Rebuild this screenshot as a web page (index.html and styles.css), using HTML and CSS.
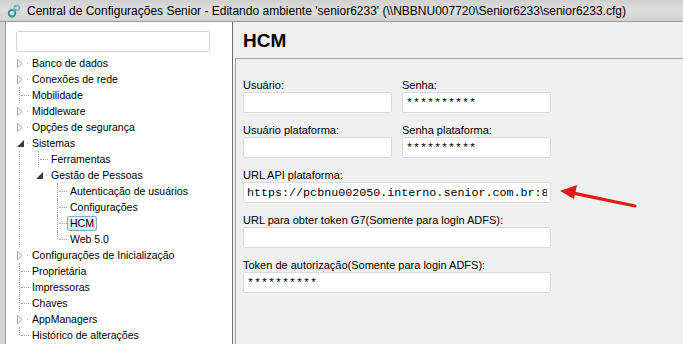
FILE: index.html
```html
<!DOCTYPE html>
<html lang="pt-BR">
<head>
    <meta charset="UTF-8">
    <meta name="viewport" content="width=device-width, initial-scale=1.0">
    <title>Central de Configurações Senior</title>
    <link rel="stylesheet" href="styles.css">
</head>
<body>

    <!-- Barra de título -->
    <div class="titlebar">
        <svg class="app-icon" viewBox="0 0 14 14">
            <circle cx="5" cy="9.2" r="3.3" fill="none" stroke="#2a8f95" stroke-width="1.8"/>
            <circle cx="10" cy="4" r="2.5" fill="none" stroke="#5fb7b9" stroke-width="1.6"/>
        </svg>
        <span class="title-text">Central de Configurações Senior - Editando ambiente 'senior6233' (\\NBBNU007720\Senior6233\senior6233.cfg)</span>
    </div>

    <div class="window-body">
        <div class="frame-left"></div>

        <!-- Árvore de configurações -->
        <div class="tree-panel">
            <input class="tree-search" type="text">
            <ul class="tree">
                <li><div class="row"><span class="exp closed"><svg viewBox="0 0 6 9"><path d="M0.5 0.5 L5.2 4.5 L0.5 8.5 Z" fill="none" stroke="#a6a6a6"/></svg></span>Banco de dados</div></li>
                <li><div class="row"><span class="exp closed"><svg viewBox="0 0 6 9"><path d="M0.5 0.5 L5.2 4.5 L0.5 8.5 Z" fill="none" stroke="#a6a6a6"/></svg></span>Conexões de rede</div></li>
                <li><div class="row"><span class="exp leaf"></span>Mobilidade</div></li>
                <li><div class="row"><span class="exp closed"><svg viewBox="0 0 6 9"><path d="M0.5 0.5 L5.2 4.5 L0.5 8.5 Z" fill="none" stroke="#a6a6a6"/></svg></span>Middleware</div></li>
                <li><div class="row"><span class="exp closed"><svg viewBox="0 0 6 9"><path d="M0.5 0.5 L5.2 4.5 L0.5 8.5 Z" fill="none" stroke="#a6a6a6"/></svg></span>Opções de segurança</div></li>
                <li>
                    <div class="row"><span class="exp open"><svg viewBox="0 0 7 7"><path d="M7 0 L7 7 L0 7 Z" fill="#3a3a3a"/></svg></span>Sistemas</div>
                    <ul>
                        <li><div class="row"><span class="exp leaf"></span>Ferramentas</div></li>
                        <li>
                            <div class="row"><span class="exp open"><svg viewBox="0 0 7 7"><path d="M7 0 L7 7 L0 7 Z" fill="#3a3a3a"/></svg></span>Gestão de Pessoas</div>
                            <ul class="no-line">
                                <li><div class="row"><span class="exp leaf"></span>Autenticação de usuários</div></li>
                                <li><div class="row"><span class="exp leaf"></span>Configurações</div></li>
                                <li><div class="row"><span class="exp leaf"></span><span class="sel">HCM</span></div></li>
                                <li><div class="row"><span class="exp leaf end"></span>Web 5.0</div></li>
                            </ul>
                        </li>
                    </ul>
                </li>
                <li><div class="row"><span class="exp closed"><svg viewBox="0 0 6 9"><path d="M0.5 0.5 L5.2 4.5 L0.5 8.5 Z" fill="none" stroke="#a6a6a6"/></svg></span>Configurações de Inicialização</div></li>
                <li><div class="row"><span class="exp leaf"></span>Proprietária</div></li>
                <li><div class="row"><span class="exp leaf"></span>Impressoras</div></li>
                <li><div class="row"><span class="exp leaf"></span>Chaves</div></li>
                <li><div class="row"><span class="exp closed"><svg viewBox="0 0 6 9"><path d="M0.5 0.5 L5.2 4.5 L0.5 8.5 Z" fill="none" stroke="#a6a6a6"/></svg></span>AppManagers</div></li>
                <li><div class="row"><span class="exp leaf end"></span>Histórico de alterações</div></li>
            </ul>
        </div>

        <div class="splitter"></div>

        <!-- Painel HCM -->
        <div class="config-panel">
            <div class="panel-header">
                <h1 class="panel-title">HCM</h1>
            </div>
            <div class="panel-body">
                <div class="form-grid">
                    <div class="field">
                        <label>Usuário:</label>
                        <input class="text-input" type="text" value="">
                    </div>
                    <div class="field">
                        <label>Senha:</label>
                        <input class="text-input" type="text" value="**********">
                    </div>
                    <div class="field">
                        <label>Usuário plataforma:</label>
                        <input class="text-input" type="text" value="">
                    </div>
                    <div class="field">
                        <label>Senha plataforma:</label>
                        <input class="text-input" type="text" value="**********">
                    </div>
                    <div class="field wide">
                        <label>URL API plataforma:</label>
                        <input class="text-input" type="text" value="https://pcbnu002050.interno.senior.com.br:8">
                    </div>
                    <div class="field wide">
                        <label>URL para obter token G7(Somente para login ADFS):</label>
                        <input class="text-input" type="text" value="">
                    </div>
                    <div class="field wide">
                        <label>Token de autorização(Somente para login ADFS):</label>
                        <input class="text-input" type="text" value="**********">
                    </div>
                </div>
            </div>
        </div>
    </div>

    <!-- Seta de destaque -->
    <svg class="red-arrow" viewBox="0 0 85 32">
        <path d="M16 12.6 L80 26" stroke="#e01b17" stroke-width="3.2" stroke-linecap="round"/>
        <path d="M5 11 L22 5 L19 19 Z" fill="#e01b17"/>
    </svg>

</body>
</html>
```

FILE: styles.css
```css
/* Geral */
* {
    box-sizing: border-box;
}

body {
    margin: 0;
    width: 683px;
    height: 344px;
    overflow: hidden;
    position: relative;
    font-family: "Liberation Sans", Arial, sans-serif;
    background-color: #d6d6d6;
}

/* Barra de título */
.titlebar {
    height: 21px;
    display: flex;
    align-items: center;
    padding-left: 7px;
    background: linear-gradient(#d0d0d0, #dddddd 45%, #d2d2d2);
}

.app-icon {
    width: 14px;
    height: 14px;
    margin-right: 6px;
}

.title-text {
    font-size: 12px;
    color: #000;
    white-space: nowrap;
}

.window-body {
    display: flex;
    height: 323px;
    border-top: 1px solid #9a9a9a;
}

.frame-left {
    width: 6px;
    background-color: #d3d3d3;
    border-right: 1px solid #9c9c9c;
}

/* Árvore */
.tree-panel {
    width: 226px;
    background-color: #fff;
}

.tree-search {
    display: block;
    width: 194px;
    height: 21px;
    margin: 9px 0 3px 10px;
    border: 1px solid #d5d5d5;
    border-radius: 2px;
    outline: none;
}

.tree,
.tree ul {
    list-style: none;
    margin: 0;
    padding: 0;
}

.tree ul {
    margin-left: 13px;
    padding-left: 5px;
    border-left: 1px dotted #a0a0a0;
}

.tree ul.no-line {
    border-left-color: transparent;
}

.row {
    height: 16px;
    display: flex;
    align-items: center;
    padding-left: 5px;
    font-size: 10.5px;
    color: #000;
    white-space: nowrap;
}

.exp {
    position: relative;
    width: 18px;
    height: 16px;
    flex: none;
    margin-right: 3px;
}

.exp svg {
    position: absolute;
}

.exp.closed svg {
    left: 6px;
    top: 4px;
    width: 6px;
    height: 9px;
}

.exp.open svg {
    left: 6px;
    top: 5px;
    width: 7px;
    height: 7px;
}

/* ponto entre o triângulo e o texto */
.exp.closed::after,
.exp.open::after {
    content: '';
    position: absolute;
    left: 16px;
    top: 8px;
    width: 1px;
    height: 1px;
    background-color: #a0a0a0;
}

.exp.leaf::before {
    content: '';
    position: absolute;
    left: 8px;
    top: 0;
    bottom: 0;
    border-left: 1px dotted #a0a0a0;
}

.exp.leaf.end::before {
    bottom: 8px;
}

.exp.leaf::after {
    content: '';
    position: absolute;
    left: 10px;
    right: 0;
    top: 8px;
    border-top: 1px dotted #a0a0a0;
}

.sel {
    margin-left: -3px;
    padding: 0 2px;
    line-height: 13px;
    border: 1px solid #84acd8;
    border-radius: 2px;
    background: linear-gradient(#eaf4fd, #d6e9fb);
}

/* Divisor */
.splitter {
    width: 3px;
    background-color: #f0f0f0;
    border-left: 1px solid #6f6f6f;
}

/* Painel de configuração */
.config-panel {
    flex: 1;
    display: flex;
    flex-direction: column;
    background-color: #f0f0f0;
}

.panel-header {
    height: 37px;
    display: flex;
    align-items: center;
    padding: 2px 0 0 8px;
    border-bottom: 1px solid #a0a0a0;
}

.panel-title {
    margin: 0;
    font-size: 19px;
    font-weight: bold;
    color: #000;
}

.panel-body {
    flex: 1;
    padding: 20px 0 0 7px;
    border-left: 1px solid #a0a0a0;
}

.form-grid {
    display: grid;
    grid-template-columns: 149px 149px;
    column-gap: 10px;
    row-gap: 11px;
}

.field.wide {
    grid-column: 1 / -1;
}

.field label {
    display: block;
    font-size: 11px;
    line-height: 13px;
    color: #000;
}

.text-input {
    display: block;
    width: 100%;
    height: 21px;
    margin: 0;
    padding: 0 3px;
    border: 1px solid #d9d9d9;
    border-radius: 2px;
    background-color: #fff;
    font-family: "Liberation Mono", "Courier New", monospace;
    font-size: 11.7px;
    color: #000;
    outline: none;
}

/* Seta vermelha */
.red-arrow {
    position: absolute;
    left: 555px;
    top: 180px;
    width: 85px;
    height: 32px;
}
```
